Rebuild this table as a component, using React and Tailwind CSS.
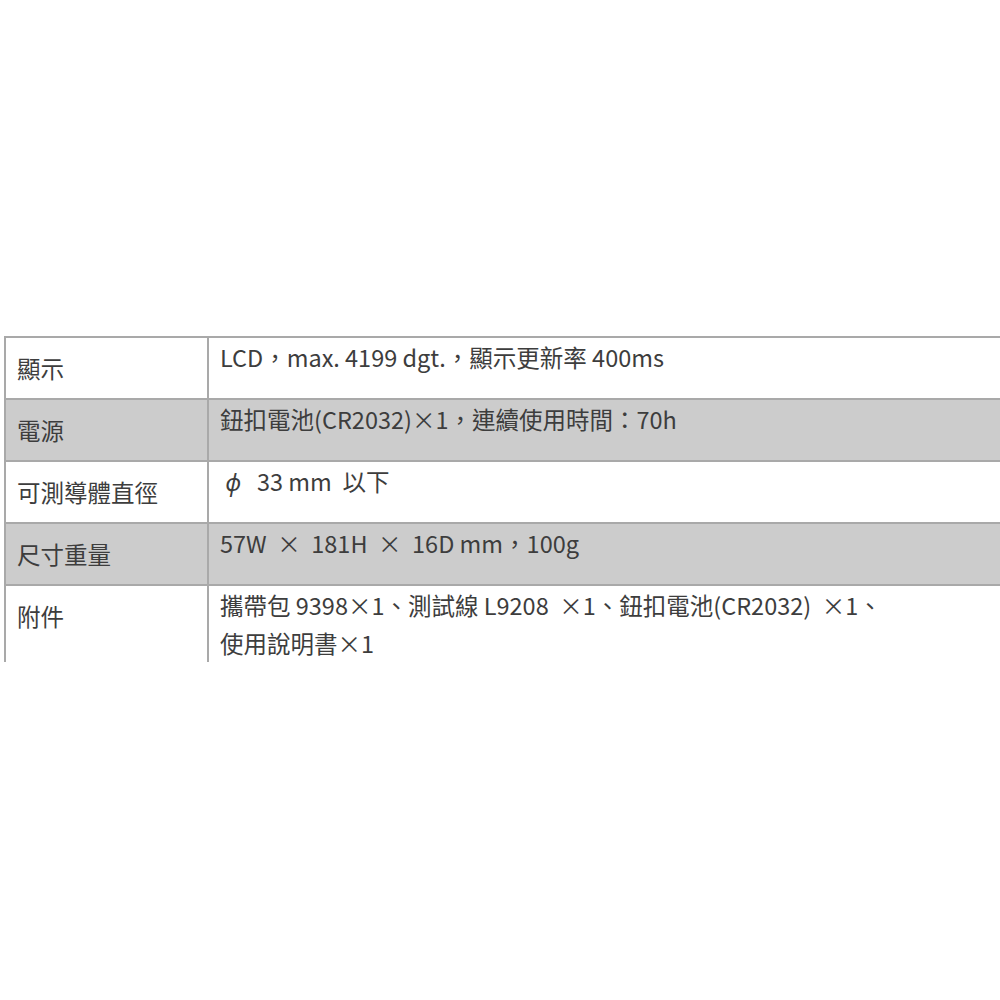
import React from "react"

const ROWS = [
  { label: "顯示", value: ["LCD，max. 4199 dgt.，顯示更新率 400ms"], gray: false },
  { label: "電源", value: ["鈕扣電池(CR2032)×1，連續使用時間：70h"], gray: true },
  { label: "可測導體直徑", value: ["phi"], gray: false },
  { label: "尺寸重量", value: ["57W  ×  181H  ×  16D mm，100g"], gray: true },
  { label: "附件", value: ["攜帶包 9398×1、測試線 L9208  ×1、鈕扣電池(CR2032)  ×1、", "使用說明書×1"], gray: false, last: true },
]

export default function App() {
  return (
    <div
      className="w-[1000px] h-[1000px] bg-white overflow-hidden text-[#3d3d3d]"
      style={{ fontFamily: '"Noto Sans CJK TC", "Noto Sans", sans-serif' }}
    >
      <div className="mt-[336px] ml-[4px] w-[1100px] border-l-2 border-t-2 border-[#a9a9a9]">
        {ROWS.map((row) => (
          <div
            key={row.label}
            className={`flex ${row.gray ? "bg-[#cccccc]" : "bg-white"} ${
              row.last ? "h-[76px]" : "h-[62px] border-b-2 border-[#a9a9a9]"
            }`}
          >
            <div className="w-[203px] shrink-0 border-r-2 border-[#a9a9a9] pl-[11px] pt-[15px] text-[23.5px] leading-[30px]">
              {row.label}
            </div>
            <div className="pl-[11px] pt-[0px] text-[23.5px] leading-[38px] whitespace-pre">
              {row.value.map((line, i) =>
                line === "phi" ? (
                  <div key={i}>
                    {" "}<i>ϕ</i>{"   33 mm  以下"}
                  </div>
                ) : (
                  <div key={i}>{line}</div>
                )
              )}
            </div>
          </div>
        ))}
      </div>
    </div>
  )
}
